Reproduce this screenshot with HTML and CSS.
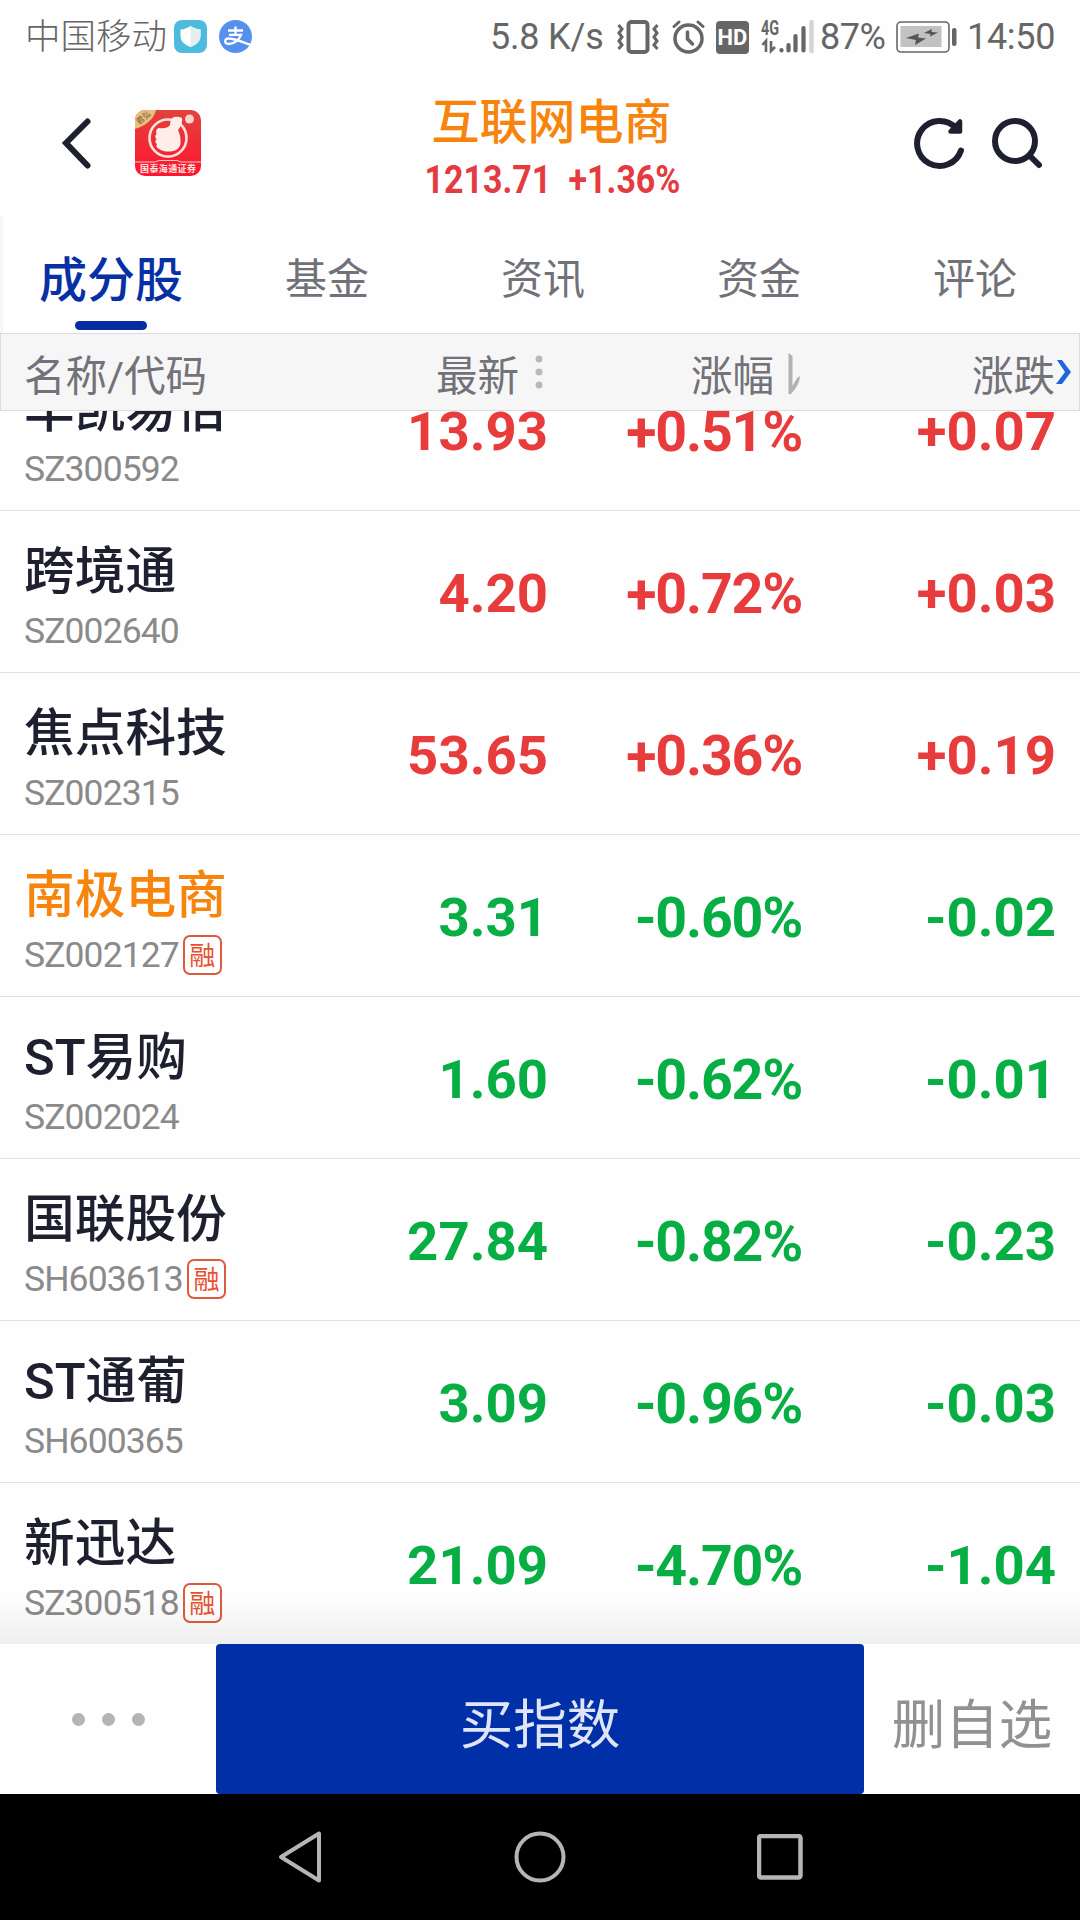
FILE: index.html
```html
<!DOCTYPE html>
<html lang="zh-CN">
<head>
    <meta charset="UTF-8">
    <meta name="viewport" content="width=device-width, initial-scale=1.0">
    <title>互联网电商</title>
    <link rel="stylesheet" href="styles.css">
</head>
<body>
    <div class="statusbar">
        <span class="carrier">中国移动</span>
        <svg class="ic-shield" width="33" height="33" viewBox="0 0 33 33">
            <rect width="33" height="33" rx="8" fill="#4dbbdd"/>
            <path d="M16.500 6C13 8.500 10 9.300 6.500 9.500V16C6.500 21 10 24.500 16.500 27C23 24.500 26.500 21 26.500 16V9.500C23 9.300 20 8.500 16.500 6Z" fill="#fff"/>
            <path d="M16.500 6C20 8.500 23 9.300 26.500 9.500V16C26.500 21 23 24.500 16.500 27Z" fill="#e6eef0"/>
        </svg>
        <svg class="ic-pay" width="33" height="33" viewBox="0 0 33 33">
            <circle cx="16.500" cy="16.500" r="16.500" fill="#5590ee"/>
            <path d="M9 10.500H24M16.500 6.500V14.500M10 14.800H22C20 20 15 24 10 24C5 24 5 18.500 9.500 18.500C15 18.500 22 21.500 31 24.500" fill="none" stroke="#fff" stroke-width="2.300"/>
        </svg>
        <span class="speed">5.8 K/s</span>
        <svg class="ic-vibrate" width="42" height="34" viewBox="0 0 42 34" fill="none" stroke="#666">
            <rect x="11.500" y="2" width="19" height="30" rx="3" stroke-width="4"/>
            <path d="M1.500 5L5 9L2 13L5 17L2 21L5 25L1.500 29M40.500 5L37 9L40 13L37 17L40 21L37 25L40.500 29" stroke-width="3"/>
        </svg>
        <svg class="ic-alarm" width="33" height="34" viewBox="0 0 33 34" fill="none" stroke="#666" stroke-linecap="round">
            <circle cx="16.500" cy="18.500" r="13.500" stroke-width="3.500"/>
            <path d="M15.500 12V19L20.500 24" stroke-width="3.500"/>
            <path d="M2 6.500L7 2M31 6.500L26 2" stroke-width="3"/>
        </svg>
        <span class="hd">HD</span>
        <svg class="ic-signal" width="54" height="34" viewBox="0 0 54 34">
            <text x="0" y="15" class="net" textLength="18" lengthAdjust="spacingAndGlyphs">4G</text>
            <path d="M1.500 25L5 21V32M10 21V31L14 27" fill="none" stroke="#666" stroke-width="2.600"/>
            <g stroke="#666" stroke-width="4.200" stroke-linecap="round">
                <path d="M20.500 30V30.500M27.500 25V30.500M34.500 16V30.500M42.500 8V30.500"/>
            </g>
            <path d="M50.500 2V31" stroke="#d5d5d5" stroke-width="4.500" stroke-linecap="round"/>
        </svg>
        <span class="percent">87%</span>
        <svg class="ic-battery" width="61" height="34" viewBox="0 0 61 34">
            <rect x="1" y="2" width="52" height="30" rx="4" fill="none" stroke="#666" stroke-width="1.600"/>
            <rect x="4.500" y="6" width="41" height="21" fill="#c2c2c2"/>
            <path d="M10 18L23 13.500L22 17.500L30 18.500L19 25L20 20Z M28 13L36 9L35.500 12L42 12.500L34 16.500L34.500 14Z" fill="#555"/>
            <rect x="56" y="8" width="4.500" height="18" rx="2" fill="#666"/>
        </svg>
        <span class="clock">14:50</span>
    </div>

    <div class="topbar">
        <svg class="back" width="34" height="54" viewBox="0 0 34 54">
            <path d="M28.500 5.500L7 27L28.500 49.500" fill="none" stroke="#1e2030" stroke-width="6" stroke-linecap="round"/>
        </svg>
        <svg class="logo" width="66" height="66" viewBox="0 0 66 66">
            <defs>
                <clipPath id="round"><rect width="66" height="66" rx="10"/></clipPath>
                <linearGradient id="red" x1="0" y1="0" x2="0" y2="1">
                    <stop offset="0" stop-color="#e3413c"/>
                    <stop offset="1" stop-color="#ff1530"/>
                </linearGradient>
            </defs>
            <g clip-path="url(#round)">
                <rect width="66" height="66" fill="url(#red)"/>
                <path d="M0 0H21Q18 13 0 19Z" fill="#e6c083"/>
                <text x="4" y="15" class="ribbon" transform="rotate(-40 4 15)">君弘</text>
                <circle cx="33" cy="28" r="18.500" fill="none" stroke="#fbe4df" stroke-width="2.600"/>
                <path d="M24 18Q32 19 35 15Q35 9 39 7Q43 6 47 8Q48 14 43 20Q46 26 45.500 34Q44 41 36 41.500Q28 42 24 39Q20 37 22 34Q19 32 21.500 29Q19 27 21.500 24Q20 19 24 18Z" fill="#fdeeea"/>
                <circle cx="54.500" cy="9" r="4.500" fill="#fbd3cd"/>
                <path d="M0 52H20L24 50.500H42L46 52H66" fill="none" stroke="#ffc5c2"/>
                <text x="5" y="61.500" class="logo-name" textLength="56">国泰海通证券</text>
            </g>
        </svg>
        <div class="quote">
            <div class="quote-name">互联网电商</div>
            <div class="quote-price"><span>1213.71</span><span>+1.36%</span></div>
        </div>
        <svg class="refresh" width="50" height="54" viewBox="0 0 50 54">
            <path d="M47 34.500A22.500 22.500 0 1 1 42 12" fill="none" stroke="#1e2030" stroke-width="6" stroke-linecap="round"/>
            <path d="M46 5.500V15.500H36.500Z" fill="#1e2030" stroke="#1e2030" stroke-width="4.500" stroke-linejoin="round"/>
        </svg>
        <svg class="search" width="52" height="54" viewBox="0 0 52 54">
            <circle cx="23" cy="25" r="20" fill="none" stroke="#1e2030" stroke-width="6"/>
            <path d="M38 40L47 49" stroke="#1e2030" stroke-width="6" stroke-linecap="round"/>
        </svg>
    </div>

    <div class="tabs">
        <div class="tab active">成分股</div>
        <div class="tab">基金</div>
        <div class="tab">资讯</div>
        <div class="tab">资金</div>
        <div class="tab">评论</div>
    </div>

    <div class="list-head">
        <div>名称/代码</div>
        <div class="sort">最新
            <svg class="sort-icon" width="14" height="40" viewBox="0 0 14 40" fill="#b9b9bb">
                <circle cx="7" cy="6" r="3.500"/><circle cx="7" cy="19" r="3.500"/><circle cx="7" cy="32" r="3.500"/>
            </svg>
        </div>
        <div class="sort">涨幅
            <svg class="sort-icon" width="14" height="42" viewBox="0 0 14 42">
                <path d="M1.500 0L5.500 3V33L10 25L13 23Q13 31 4 41H1.500Z" fill="#b2b2b4"/>
            </svg>
        </div>
        <div class="sort">涨跌
            <svg class="more-cols" width="16" height="24" viewBox="0 0 16 24">
                <path d="M1 0H6L15 12L6 24H0L9 12Z" fill="#1f66dd"/>
            </svg>
        </div>
    </div>

    <div class="list">
        <div class="row up">
            <div class="stock"><div class="name">华凯易佰</div><div class="code">SZ300592</div></div>
            <div class="num">13.93</div><div class="num pct">+0.51%</div><div class="num">+0.07</div>
        </div>
        <div class="row up">
            <div class="stock"><div class="name">跨境通</div><div class="code">SZ002640</div></div>
            <div class="num">4.20</div><div class="num pct">+0.72%</div><div class="num">+0.03</div>
        </div>
        <div class="row up">
            <div class="stock"><div class="name">焦点科技</div><div class="code">SZ002315</div></div>
            <div class="num">53.65</div><div class="num pct">+0.36%</div><div class="num">+0.19</div>
        </div>
        <div class="row down">
            <div class="stock"><div class="name own">南极电商</div><div class="code">SZ002127<span class="tag">融</span></div></div>
            <div class="num">3.31</div><div class="num pct">-0.60%</div><div class="num">-0.02</div>
        </div>
        <div class="row down">
            <div class="stock"><div class="name">ST易购</div><div class="code">SZ002024</div></div>
            <div class="num">1.60</div><div class="num pct">-0.62%</div><div class="num">-0.01</div>
        </div>
        <div class="row down">
            <div class="stock"><div class="name">国联股份</div><div class="code">SH603613<span class="tag">融</span></div></div>
            <div class="num">27.84</div><div class="num pct">-0.82%</div><div class="num">-0.23</div>
        </div>
        <div class="row down">
            <div class="stock"><div class="name">ST通葡</div><div class="code">SH600365</div></div>
            <div class="num">3.09</div><div class="num pct">-0.96%</div><div class="num">-0.03</div>
        </div>
        <div class="row down">
            <div class="stock"><div class="name">新迅达</div><div class="code">SZ300518<span class="tag">融</span></div></div>
            <div class="num">21.09</div><div class="num pct">-4.70%</div><div class="num">-1.04</div>
        </div>
    </div>

    <div class="actions">
        <div class="dots"><i></i><i></i><i></i></div>
        <div class="buy">买指数</div>
        <div class="remove">删自选</div>
    </div>

    <div class="navbar">
        <svg width="46" height="54" viewBox="0 0 46 54"><path d="M42 3.500V50.500L4 27Z" fill="none" stroke="#b5b5b5" stroke-width="4" stroke-linejoin="round"/></svg>
        <svg width="52" height="52" viewBox="0 0 52 52"><circle cx="26" cy="26" r="23.500" fill="none" stroke="#b5b5b5" stroke-width="4"/></svg>
        <svg width="46" height="46" viewBox="0 0 46 46"><rect x="2" y="2" width="41.500" height="41.500" rx="2" fill="none" stroke="#b5b5b5" stroke-width="4.500"/></svg>
    </div>
</body>
</html>
```
FILE: styles.css
```css
* {
    box-sizing: border-box;
}

body {
    width: 1080px;
    height: 1920px;
    margin: 0;
    overflow: hidden;
    display: flex;
    flex-direction: column;
    background: #fefefe;
    font-family: Roboto, "Noto Sans CJK SC", sans-serif;
    white-space: nowrap;
}

svg {
    display: block;
    flex: none;
}

/* system status bar */
.statusbar {
    height: 74px;
    display: flex;
    align-items: center;
    padding-left: 25px;
    color: #666;
    font-size: 36px;
}

.carrier {
    width: 149px;
    line-height: 40px;
    font-size: 35.500px;
    font-weight: 300;
}

.ic-shield,
.ic-pay {
    margin-bottom: 1px;
}

.ic-pay {
    margin-left: 12px;
}

.speed {
    width: 127px;
    margin-left: 238px;
    letter-spacing: -0.2px;
}

.ic-alarm {
    margin-left: 13px;
}

.hd {
    width: 33px;
    height: 33px;
    margin-left: 11px;
    border-radius: 4px;
    background: #666;
    color: #fff;
    font-size: 22px;
    font-weight: bold;
    line-height: 34px;
    text-align: center;
}

.ic-signal {
    margin-left: 12px;
}

.net {
    font-size: 20px;
    font-weight: bold;
    fill: #666;
}

.percent {
    width: 76px;
    margin-left: 5px;
    letter-spacing: -0.5px;
}

.clock {
    margin-left: 10px;
    letter-spacing: -0.3px;
}

/* title */
.topbar {
    height: 142px;
    display: flex;
    align-items: center;
    padding: 0 36px 4px 59px;
}

.logo {
    margin-left: 42px;
}

.ribbon {
    font-size: 8px;
    fill: #7a5a2a;
}

.logo-name {
    font-size: 9px;
    font-weight: bold;
    fill: #ffe3e0;
}

.quote {
    width: 702px;
    padding-top: 14px;
    text-align: center;
}

.quote-name {
    height: 60px;
    line-height: 56px;
    font-size: 48px;
    font-weight: 500;
    color: #f7840c;
}

.quote-price {
    height: 50px;
    display: flex;
    justify-content: center;
    gap: 20px;
    margin: 0 -50px;
    transform: translateX(1px) scaleX(0.87);
    line-height: 50px;
    font-size: 39px;
    font-weight: bold;
    color: #e33b40;
}

.refresh {
    margin-left: 12px;
}

.search {
    margin-left: 28px;
}

/* tabs */
.tabs {
    height: 117px;
    display: flex;
    border-left: 3px solid #f7f7f7;
    margin-right: -3px;
}

.tab {
    flex: 1;
    height: 117px;
    line-height: 127px;
    text-align: center;
    font-size: 42px;
    color: #707278;
}

.tab.active {
    position: relative;
    line-height: 129px;
    font-size: 48px;
    font-weight: 500;
    color: #0630a4;
}

.tab.active::after {
    content: "";
    position: absolute;
    left: 72px;
    bottom: 3px;
    width: 72px;
    height: 9px;
    border-radius: 5px;
    background: #062ea2;
}

/* table */
.list-head,
.row {
    display: grid;
    grid-template-columns: 340px 184px 255px 253px;
    padding: 0 24px;
}

.list-head {
    height: 78px;
    line-height: 86px;
    padding: 0 23px;
    border: 1px solid #dcdcde;
    background: #f6f6f7;
    font-size: 41.500px;
    color: #727278;
}

.sort {
    position: relative;
    text-align: right;
    padding-right: 29px;
}

.sort:last-child {
    padding-right: 1px;
}

.sort-icon {
    position: absolute;
    right: 2px;
    top: 19px;
}

.more-cols {
    position: absolute;
    right: -16px;
    top: 26px;
}

.list {
    position: relative;
    height: 1233px;
    overflow: hidden;
    display: flex;
    flex-direction: column;
    justify-content: flex-end;
}

/* shade above the action bar */
.list::after {
    content: "";
    position: absolute;
    left: 0;
    right: 0;
    bottom: 0;
    height: 50px;
    background: linear-gradient(rgba(0, 0, 0, 0), rgba(0, 0, 0, 0.06));
}

.row {
    flex: none;
    height: 162px;
    border-bottom: 1px solid #e2e2e2;
}

.row:last-child {
    height: 161px;
    border-bottom: none;
}

.name {
    height: 60px;
    margin-top: 31px;
    line-height: 60px;
    font-size: 50.700px;
    font-weight: 500;
    color: #1e2030;
}

.name.own {
    color: #f7840c;
}

.code {
    height: 58px;
    display: flex;
    align-items: center;
    font-size: 35.500px;
    letter-spacing: -0.9px;
    color: #8a8a8a;
}

.tag {
    width: 39px;
    height: 40px;
    margin-left: 4px;
    border: 2px solid #dd5a3c;
    border-radius: 7px;
    line-height: 39px;
    text-align: center;
    font-size: 26px;
    letter-spacing: 0;
    color: #e8502e;
}

.num {
    line-height: 165px;
    text-align: right;
    font-size: 54.500px;
    font-weight: bold;
}

.pct {
    line-height: 168px;
    font-size: 55.500px;
    letter-spacing: -1.2px;
    padding-right: 1px;
}

.up .num {
    color: #e83c3c;
}

.down .num {
    color: #07ae43;
}

/* bottom actions */
.actions {
    height: 150px;
    display: flex;
    line-height: 163px;
    text-align: center;
    font-size: 53.500px;
}

.dots {
    width: 216px;
    display: flex;
    justify-content: center;
    align-items: center;
    gap: 17px;
}

.dots i {
    width: 13px;
    height: 13px;
    border-radius: 50%;
    background: #b4b4b4;
}

.buy {
    width: 648px;
    border-radius: 4px;
    background: #002fa7;
    color: #dfe4f6;
}

.remove {
    width: 216px;
    color: #919191;
}

.navbar {
    height: 126px;
    display: flex;
    justify-content: center;
    align-items: center;
    gap: 191px;
    background: #000;
}
```
